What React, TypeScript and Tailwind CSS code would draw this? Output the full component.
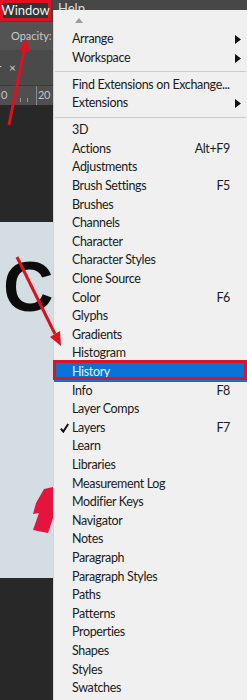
import React from 'react';

type Item = { label: string; shortcut?: string; sub?: boolean; checked?: boolean; active?: boolean };

const topItems: (Item | 'sep')[] = [
  { label: 'Arrange', sub: true },
  { label: 'Workspace', sub: true },
  'sep',
  { label: 'Find Extensions on Exchange...' },
  { label: 'Extensions', sub: true },
  'sep',
];

const panels: Item[] = [
  { label: '3D' },
  { label: 'Actions', shortcut: 'Alt+F9' },
  { label: 'Adjustments' },
  { label: 'Brush Settings', shortcut: 'F5' },
  { label: 'Brushes' },
  { label: 'Channels' },
  { label: 'Character' },
  { label: 'Character Styles' },
  { label: 'Clone Source' },
  { label: 'Color', shortcut: 'F6' },
  { label: 'Glyphs' },
  { label: 'Gradients' },
  { label: 'Histogram' },
  { label: 'History', active: true },
  { label: 'Info', shortcut: 'F8' },
  { label: 'Layer Comps' },
  { label: 'Layers', shortcut: 'F7', checked: true },
  { label: 'Learn' },
  { label: 'Libraries' },
  { label: 'Measurement Log' },
  { label: 'Modifier Keys' },
  { label: 'Navigator' },
  { label: 'Notes' },
  { label: 'Paragraph' },
  { label: 'Paragraph Styles' },
  { label: 'Paths' },
  { label: 'Patterns' },
  { label: 'Properties' },
  { label: 'Shapes' },
  { label: 'Styles' },
  { label: 'Swatches' },
];

const MenuRow = ({ item }: { item: Item }) => (
  <div
    className={`relative flex items-center justify-between whitespace-nowrap h-[18.6px] pl-[18px] pr-[17px] ${
      item.active ? 'bg-[#0a74d6] text-[#e3f0ff]' : 'text-[#1b1b1b]'
    }`}
  >
    {item.checked && (
      <svg className="absolute left-[6px] top-[4px]" width="9" height="10" viewBox="0 0 9 10">
        <path d="M0.8 5.6 L3.3 8.6 L8.2 1" fill="none" stroke="#111" strokeWidth="2" />
      </svg>
    )}
    <span>{item.label}</span>
    {item.shortcut && <span>{item.shortcut}</span>}
    {item.sub && (
      <svg className="absolute right-[6px] top-[5px]" width="6" height="9" viewBox="0 0 6 9">
        <path d="M0 0 L6 4.5 L0 9 Z" fill="#111" />
      </svg>
    )}
    {item.active && (
      <span className="absolute left-[-1px] right-0 top-[-3px] bottom-[2px] border-[3px] border-[#d8162a]" />
    )}
  </div>
);

export default function App() {
  return (
    <div className="relative flex w-[247px] h-[700px] overflow-hidden font-['Lato','Open_Sans',sans-serif] text-[12.5px] tracking-[-0.35px]">
      {/* photoshop workspace behind the menu */}
      <div className="w-[53px] shrink-0 flex flex-col">
        <div className="h-[22px] bg-[#444444] flex">
          <div className="w-[51px] h-[21px] border-[3px] border-[#df1020] bg-[#333333] text-[#f2f2f2] flex items-center justify-center text-[13px] tracking-normal leading-none">
            Window
          </div>
        </div>
        <div className="h-[28px] bg-[#535353] text-[#c9c9c9] text-[11px] tracking-normal whitespace-nowrap flex items-center pl-[11px]">
          Opacity:
        </div>
        <div className="h-[35px] bg-[#4a4a4a] text-[#d0d0d0] flex items-center gap-[8px] text-[12px]">
          <span className="ml-[-3px]">r</span>
          <span>×</span>
        </div>
        <div className="h-[20px] bg-[#4f4f4f] border-t border-[#3a3a3a] text-[#c4c4c4] text-[11px] flex items-center relative">
          <span className="ml-[1px]">0</span>
          <span className="ml-[6px] w-px h-[4px] bg-[#9a9a9a] self-end mb-[3px]" />
          <span className="ml-[6px] w-px h-[4px] bg-[#9a9a9a] self-end mb-[3px]" />
          <span className="ml-[6px] w-px h-[4px] bg-[#9a9a9a] self-end mb-[3px]" />
          <span className="ml-[8px] w-px h-full bg-[#8a8a8a]" />
          <span className="ml-[1px]">20</span>
        </div>
        <div className="h-[117px] bg-[#282828]" />
        <div className="h-[356px] bg-[#d3dde2] overflow-hidden">
          <div className="mt-[30px] ml-[3px] text-[70px] leading-none font-black tracking-normal text-[#0c0c0c] font-['Liberation_Sans',sans-serif]">
            C
          </div>
        </div>
        <div className="flex-1 bg-[#282828]" />
      </div>

      <div className="flex-1 flex flex-col">
        <div className="h-[10px] bg-[#474747] overflow-hidden text-[#dedede] text-[13px] tracking-normal leading-none pl-[5px] pt-[2px]">
          Help
        </div>
        <div className="flex-1 bg-[#f0f0f0] border-l border-[#d4d4d4]">
          <div className="h-[20px] flex items-center pl-[21px]">
            <svg width="8" height="5" viewBox="0 0 8 5">
              <path d="M0 5 L4 0 L8 5 Z" fill="#9a9a9a" />
            </svg>
          </div>
          {topItems.map((it, i) =>
            it === 'sep' ? (
              <div key={i} className="h-[8.5px] flex items-center px-[1px]">
                <div className="h-px w-full bg-[#cdcdcd]" />
              </div>
            ) : (
              <MenuRow key={i} item={it} />
            )
          )}
          {panels.map((it) => (
            <MenuRow key={it.label} item={it} />
          ))}
        </div>
      </div>

      {/* annotations */}
      <svg className="absolute inset-0 pointer-events-none" width="247" height="700" viewBox="0 0 247 700">
        <line x1="9" y1="125" x2="24" y2="50" stroke="#e0101e" strokeWidth="3" />
        <path d="M26 38 L30 52 L19 50 Z" fill="#e0101e" />
        <line x1="17" y1="257" x2="55" y2="334" stroke="#e0101e" strokeWidth="3" />
        <path d="M61 346 L50 337 L60 331 Z" fill="#e0101e" />
        <path d="M44 489 L53 487 L53 518 L48 533 L33 530 L39 513 L33 514 L36 503 Z" fill="#e4143c" />
      </svg>
    </div>
  );
}
